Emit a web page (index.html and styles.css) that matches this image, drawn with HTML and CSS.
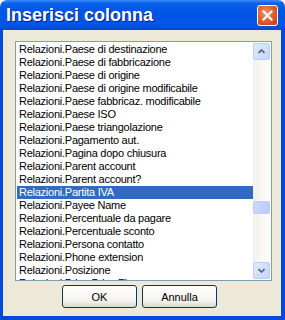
FILE: index.html
```html
<!DOCTYPE html>
<html lang="it">
<head>
	<meta charset="UTF-8">
	<title>Inserisci colonna</title>
	<link rel="stylesheet" href="styles.css">
</head>
<body>
<div class="window">
	<div class="titlebar">
		<span class="title">Inserisci colonna</span>
		<button class="close">
			<svg width="11" height="11" viewBox="0 0 11 11"><path d="M1.5 1.5 L9.5 9.5 M9.5 1.5 L1.5 9.5" stroke="#fff" stroke-width="2.2" stroke-linecap="square"/></svg>
		</button>
	</div>
	<div class="client">
		<div class="listbox">
			<ul class="items">
				<li>Relazioni.Paese di destinazione</li>
				<li>Relazioni.Paese di fabbricazione</li>
				<li>Relazioni.Paese di origine</li>
				<li>Relazioni.Paese di origine modificabile</li>
				<li>Relazioni.Paese fabbricaz. modificabile</li>
				<li>Relazioni.Paese ISO</li>
				<li>Relazioni.Paese triangolazione</li>
				<li>Relazioni.Pagamento aut.</li>
				<li>Relazioni.Pagina dopo chiusura</li>
				<li>Relazioni.Parent account</li>
				<li>Relazioni.Parent account?</li>
				<li class="selected">Relazioni.Partita IVA</li>
				<li>Relazioni.Payee Name</li>
				<li>Relazioni.Percentuale da pagare</li>
				<li>Relazioni.Percentuale sconto</li>
				<li>Relazioni.Persona contatto</li>
				<li>Relazioni.Phone extension</li>
				<li>Relazioni.Posizione</li>
				<li>Relazioni.Price Price Flag</li>
			</ul>
			<div class="scrollbar">
				<div class="arrow">
					<svg width="7" height="5" viewBox="0 0 7 5"><path d="M0.5 4 L3.5 1 L6.5 4" fill="none" stroke="#4D6185" stroke-width="1.6"/></svg>
				</div>
				<div class="track">
					<div class="thumb"></div>
				</div>
				<div class="arrow">
					<svg width="7" height="5" viewBox="0 0 7 5"><path d="M0.5 1 L3.5 4 L6.5 1" fill="none" stroke="#4D6185" stroke-width="1.6"/></svg>
				</div>
			</div>
		</div>
		<div class="buttons">
			<button class="btn">OK</button>
			<button class="btn">Annulla</button>
		</div>
	</div>
</div>
</body>
</html>
```

FILE: styles.css
```css
body {
	margin: 0;
	background: #fff;
}

.window {
	width: 285px;
	height: 320px;
	display: flex;
	flex-direction: column;
	font-family: "Liberation Sans", Arial, sans-serif;
}

.titlebar {
	height: 30px;
	display: flex;
	align-items: center;
	justify-content: space-between;
	padding: 0 6px 0 6px;
	box-sizing: border-box;
	border-radius: 7px 7px 0 0;
	background: linear-gradient(#3A8CF8 0%, #0A5FEA 12%, #0055E5 40%, #0256E8 80%, #0647D0 100%);
}

.title {
	color: #fff;
	font-weight: bold;
	font-size: 18px;
	text-shadow: 1px 1px 0 #0A1E8C;
	padding-top: 1px;
}

.close {
	width: 21px;
	height: 21px;
	padding: 0;
	border: 1px solid #fff;
	border-radius: 3px;
	background: radial-gradient(circle at 40% 35%, #F0926C 0%, #E1582C 55%, #C43B12 100%);
	display: flex;
	align-items: center;
	justify-content: center;
	margin-right: 1px;
}

.client {
	flex: 1;
	background: #ECE9D8;
	border: 3px solid #0648DA;
	border-top: none;
	border-right-width: 4px;
	border-bottom-width: 4px;
	padding: 11px 9px 0 12px;
	display: flex;
	flex-direction: column;
}

.listbox {
	height: 240px;
	box-sizing: border-box;
	border: 1px solid #7F9DB9;
	background: #fff;
	display: flex;
	overflow: hidden;
	padding: 1px;
}

.items {
	list-style: none;
	margin: 0;
	padding: 0;
	flex: 1;
	font-size: 11px;
	letter-spacing: -0.25px;
	color: #000;
}

.items li {
	height: 13px;
	line-height: 13px;
	padding-left: 2px;
	white-space: nowrap;
}

.items .selected {
	background: #316AC5;
	color: #fff;
}

.scrollbar {
	width: 17px;
	display: flex;
	flex-direction: column;
	background: linear-gradient(to right, #F3F1EC, #FEFEFB);
}

.arrow {
	height: 17px;
	box-sizing: border-box;
	border: 1px solid #BCCDF5;
	border-radius: 2px;
	background: linear-gradient(135deg, #E2EBFE, #C4D5FB);
	display: flex;
	align-items: center;
	justify-content: center;
}

.track {
	flex: 1;
	padding-top: 141px;
}

.thumb {
	height: 13px;
	box-sizing: border-box;
	border: 1px solid #BCCDF5;
	border-radius: 2px;
	background: linear-gradient(to right, #CAD9FC, #B9CDFB);
}

.buttons {
	display: flex;
	gap: 5px;
	padding: 4px 0 0 47px;
}

.btn {
	width: 75px;
	height: 23px;
	font-family: "Liberation Sans", Arial, sans-serif;
	font-size: 11px;
	color: #000;
	border: 1px solid #003C74;
	border-radius: 3px;
	background: linear-gradient(#FFFFFF, #F4F3EE 70%, #DCD8CA);
	padding: 0;
}
```
